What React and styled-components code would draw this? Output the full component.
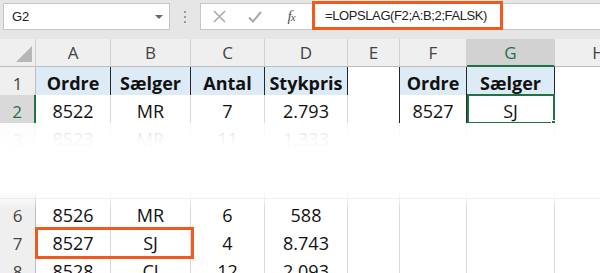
import React from "react";
import styled, { createGlobalStyle } from "styled-components";

const GREEN = "#217346";
const ORANGE = "#f25a1d";
const GRID = "#d9d9d9";
const DARK = "#262626";
const COLS = "36px 75px 80px 74px 83px 52px 67px 88px 88px";

const GlobalStyle = createGlobalStyle`
  html, body { margin: 0; padding: 0; background: #fff; }
  body {
    width: 600px;
    height: 273px;
    overflow: hidden;
    font-family: "Open Sans", "Liberation Sans", sans-serif;
  }
`;

const Toolbar = styled.div`
  display: flex;
  align-items: flex-start;
  height: 39px;
  padding-top: 3px;
  box-sizing: border-box;
  background: #e6e6e6;
`;

const NameBox = styled.div`
  margin-left: 3px;
  width: 167px;
  height: 27px;
  box-sizing: border-box;
  background: #fff;
  border: 1px solid #c6c6c6;
  display: flex;
  align-items: center;
  justify-content: space-between;
  padding: 0 6px 0 8px;
  font: 13px "Liberation Sans", sans-serif;
  color: #222;
`;

const Caret = styled.span`
  width: 0;
  height: 0;
  border-left: 4px solid transparent;
  border-right: 4px solid transparent;
  border-top: 4px solid #666;
`;

const Grip = styled.div`
  width: 30px;
  height: 27px;
  display: flex;
  flex-direction: column;
  align-items: center;
  justify-content: center;
  gap: 3px;
  span {
    width: 2px;
    height: 2px;
    background: #9a9a9a;
  }
`;

const FormulaBar = styled.div`
  flex: 1;
  height: 27px;
  box-sizing: border-box;
  background: #fff;
  border: 1px solid #c6c6c6;
  border-right: none;
  display: flex;
  align-items: center;
`;

const IconSlot = styled.div`
  width: 36px;
  display: flex;
  justify-content: center;
  align-items: center;
  color: #a8a8a8;
`;

const Fx = styled.span`
  font-family: "Liberation Serif", serif;
  font-style: italic;
  font-size: 15px;
  color: #555;
  letter-spacing: -1px;
  small {
    font-size: 11px;
  }
`;

const FormulaField = styled.div`
  align-self: flex-start;
  margin: -3px 0 0 3px;
  width: 191px;
  height: 29px;
  box-sizing: border-box;
  border: 3px solid ${ORANGE};
  padding-left: 10px;
  display: flex;
  align-items: center;
  font: 13px "Liberation Sans", sans-serif;
  letter-spacing: -0.4px;
  color: #222;
  white-space: nowrap;
`;

const Sheet = styled.div`
  overflow: hidden;
`;

const Row = styled.div`
  display: grid;
  grid-template-columns: ${COLS};
  height: ${(p) => p.$h || 28}px;
`;

const Cell = styled.div`
  position: relative;
  box-sizing: border-box;
  border-right: 1px solid ${(p) => p.$r || GRID};
  border-bottom: 1px solid ${(p) => p.$b || GRID};
  background: ${(p) => (p.$fill ? "#ddebf7" : "#fff")};
  font-weight: ${(p) => (p.$bold ? 700 : 400)};
  font-size: 18px;
  color: #111;
  display: flex;
  align-items: center;
  justify-content: center;
  padding-top: 4px;
  white-space: nowrap;
`;

const ColHead = styled.div`
  position: relative;
  box-sizing: border-box;
  background: ${(p) => (p.$sel ? "#d2d2d2" : "#efefef")};
  color: ${(p) => (p.$sel ? GREEN : "#444")};
  border-right: 1px solid #d0d0d0;
  border-bottom: ${(p) => (p.$sel ? `2px solid ${GREEN}` : "1px solid #bdbdbd")};
  font-size: 17px;
  display: flex;
  align-items: center;
  justify-content: center;
  white-space: nowrap;
`;

const Corner = styled(ColHead)`
  &::after {
    content: "";
    position: absolute;
    right: 3px;
    bottom: 4px;
    width: 0;
    height: 0;
    border-left: 16px solid transparent;
    border-bottom: 16px solid #b7b7b7;
  }
`;

const RowHead = styled.div`
  box-sizing: border-box;
  background: ${(p) => (p.$sel ? "#d9d9d9" : "#efefef")};
  color: ${(p) => (p.$sel ? GREEN : "#444")};
  border-right: ${(p) => (p.$sel ? `2px solid ${GREEN}` : "1px solid #bdbdbd")};
  border-bottom: 1px solid #d0d0d0;
  font-size: 17px;
  display: flex;
  align-items: center;
  justify-content: center;
  padding-top: 4px;
`;

const Selection = styled.div`
  position: absolute;
  left: 0;
  top: -1px;
  right: -1px;
  bottom: -1px;
  border: 2px solid ${GREEN};
  pointer-events: none;
  &::after {
    content: "";
    position: absolute;
    right: -5px;
    bottom: -5px;
    width: 5px;
    height: 5px;
    background: ${GREEN};
    border: 1px solid #fff;
  }
`;

const Highlight = styled.div`
  position: absolute;
  left: -1px;
  top: 0;
  width: 159px;
  height: 32px;
  box-sizing: border-box;
  border: 3px solid ${ORANGE};
  z-index: 2;
  pointer-events: none;
`;

const FadeZone = styled.div`
  position: relative;
  &::after {
    content: "";
    position: absolute;
    left: 0;
    right: 0;
    top: 0;
    bottom: -10px;
    z-index: 3;
    background: linear-gradient(
      to bottom,
      rgba(255, 255, 255, 0.8) 0%,
      rgba(255, 255, 255, 0.97) 20%,
      #fff 38%,
      #fff 80%,
      rgba(255, 255, 255, 0) 100%
    );
  }
`;

const letters = ["A", "B", "C", "D", "E", "F", "G", "H"];

const DataRow = ({ n, vals, h, highlight }) => (
  <Row $h={h}>
    <RowHead>{n}</RowHead>
    {vals.map((v, i) => (
      <Cell key={i}>
        {highlight && i === 0 && <Highlight />}
        {v}
      </Cell>
    ))}
    <Cell />
    <Cell />
    <Cell />
    <Cell />
  </Row>
);

export default function App() {
  return (
    <>
      <GlobalStyle />
      <Toolbar>
        <NameBox>
          G2
          <Caret />
        </NameBox>
        <Grip>
          <span />
          <span />
          <span />
        </Grip>
        <FormulaBar>
          <IconSlot>
            <svg width="13" height="13" viewBox="0 0 13 13">
              <path d="M1 1L12 12M12 1L1 12" stroke="currentColor" strokeWidth="1.5" fill="none" />
            </svg>
          </IconSlot>
          <IconSlot>
            <svg width="14" height="12" viewBox="0 0 14 12">
              <path d="M1 6.5L5 10.5L13 1" stroke="currentColor" strokeWidth="2" fill="none" />
            </svg>
          </IconSlot>
          <IconSlot>
            <Fx>
              f<small>x</small>
            </Fx>
          </IconSlot>
          <FormulaField>=LOPSLAG(F2;A:B;2;FALSK)</FormulaField>
        </FormulaBar>
      </Toolbar>

      <Sheet>
        <Row>
          <Corner />
          {letters.map((l) => (
            <ColHead key={l} $sel={l === "G"}>
              {l}
            </ColHead>
          ))}
        </Row>

        <Row>
          <RowHead>1</RowHead>
          <Cell $fill $bold $r={DARK} $b={DARK}>Ordre</Cell>
          <Cell $fill $bold $r={DARK} $b={DARK}>Sælger</Cell>
          <Cell $fill $bold $r={DARK} $b={DARK}>Antal</Cell>
          <Cell $fill $bold $r={DARK} $b={DARK}>Stykpris</Cell>
          <Cell $r={DARK} />
          <Cell $fill $bold $r={DARK} $b={DARK}>Ordre</Cell>
          <Cell $fill $bold $r={DARK}>Sælger</Cell>
          <Cell />
        </Row>

        <Row>
          <RowHead $sel>2</RowHead>
          <Cell>8522</Cell>
          <Cell>MR</Cell>
          <Cell>7</Cell>
          <Cell>2.793</Cell>
          <Cell $r={DARK} />
          <Cell $r={DARK} $b={DARK}>8527</Cell>
          <Cell>
            <Selection />
            SJ
          </Cell>
          <Cell />
        </Row>

        <FadeZone>
          <DataRow n={3} vals={["8523", "MR", "11", "1.333"]} />
          <DataRow n={4} vals={["8525", "MR", "11", "1.125"]} />
          <DataRow n="" vals={["", "", "", ""]} h={20} />
        </FadeZone>

        <DataRow n={6} vals={["8526", "MR", "6", "588"]} />
        <DataRow n={7} vals={["8527", "SJ", "4", "8.743"]} highlight />
        <DataRow n={8} vals={["8528", "CJ", "12", "2.093"]} />
      </Sheet>
    </>
  );
}
